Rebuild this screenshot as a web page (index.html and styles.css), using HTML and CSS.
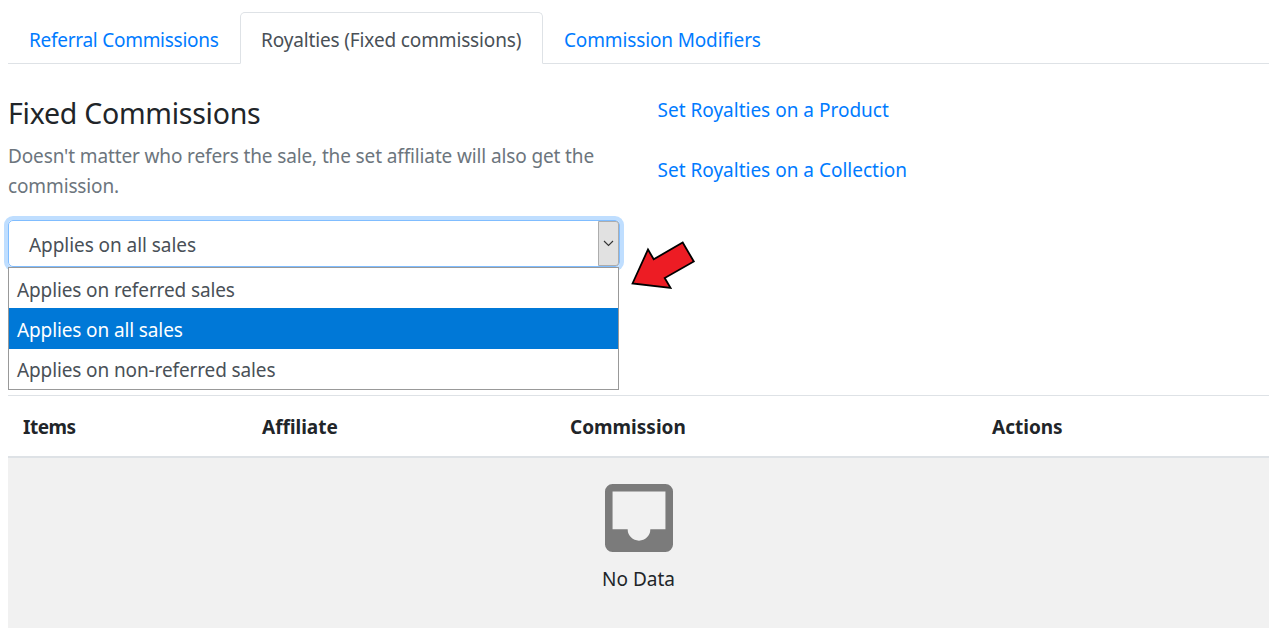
FILE: index.html
```html
<!DOCTYPE html>
<html lang="en">
<head>
<meta charset="utf-8">
<title>Fixed Commissions</title>
<link rel="stylesheet" href="styles.css">
</head>
<body>
<nav class="tabs">
  <a class="tab tab-referral"><span>Referral Commissions</span></a>
  <a class="tab tab-active"><span>Royalties (Fixed commissions)</span></a>
  <a class="tab tab-modifiers"><span>Commission Modifiers</span></a>
</nav>
<main class="settings">
  <section class="fixed">
    <h1 class="title"><span>Fixed Commissions</span></h1>
    <p class="description"><span>Doesn't matter who refers the sale, the set affiliate will also get the</span><br><span>commission.</span></p>
    <div class="select">
      <div class="select-value"><span>Applies on all sales</span></div>
      <div class="select-button"><svg width="11" height="7" viewBox="0 0 11 7"><path d="M1 1l4.5 4.5L10 1" fill="none" stroke="#333" stroke-width="1.1"/></svg></div>
      <div class="menu">
        <div class="option"><span>Applies on referred sales</span></div>
        <div class="option option-selected"><span>Applies on all sales</span></div>
        <div class="option"><span>Applies on non-referred sales</span></div>
      </div>
      <svg class="pointer" width="68" height="52" viewBox="629 239 68 52"><path d="M632.5 283.5L648 249.5L653.7 259.3L682.7 242.5L693.8 261.5L664.7 278L670.5 287.8Z" fill="#ed1c24" stroke="#000" stroke-width="1.8"/></svg>
    </div>
  </section>
  <section class="links">
    <a class="link"><span>Set Royalties on a Product</span></a>
    <a class="link"><span>Set Royalties on a Collection</span></a>
  </section>
</main>
<section class="table">
  <div class="table-head">
    <span class="col-items">Items</span><span>Affiliate</span><span>Commission</span><span>Actions</span>
  </div>
  <div class="empty">
    <svg class="tray" width="68" height="68" viewBox="3 3 18 18"><path d="M19 3H5a2 2 0 0 0-2 2v14a2 2 0 0 0 2 2h14a2 2 0 0 0 2-2V5a2 2 0 0 0-2-2zm0 12h-4a3 3 0 0 1-6 0H5V5h14z" fill="#7b7b7b"/></svg>
    <span>No Data</span>
  </div>
</section>
</body>
</html>
```
FILE: styles.css
```css
* { box-sizing: border-box; }
body {
  margin: 0;
  padding: 12px 8px 0;
  background: #fff;
  color: #212529;
  font: 19px/30px "Noto Sans", "Open Sans", sans-serif;
}
.tabs { display: flex; height: 52px; border-bottom: 1px solid #dee2e6; }
.tab {
  height: 52px;
  padding: 12px 20px;
  border: 1px solid transparent;
  color: #007bff;
  letter-spacing: -0.14px;
  white-space: nowrap;
}
.tab-referral { width: 232px; letter-spacing: -0.27px; }
.tab-active {
  width: 303px;
  color: #495057;
  background: #fff;
  border-color: #dee2e6 #dee2e6 #fff;
  border-radius: 5px 5px 0 0;
}
.settings { display: flex; height: 331px; }
.fixed { width: 612px; padding-top: 31px; }
.title { margin: 0 0 10px; font-size: 28.5px; font-weight: 400; line-height: 36px; letter-spacing: -0.25px; }
.description { margin: 0 0 19px; color: #6c757d; letter-spacing: -0.13px; white-space: nowrap; }
.select {
  position: relative;
  display: flex;
  height: 47px;
  border: 1px solid #80bdff;
  border-radius: 5px;
  box-shadow: 0 0 0 4px #bfdeff;
  color: #495057;
  letter-spacing: -0.06px;
}
.select-value { flex: 1; padding: 9px 20px; }
.select-button {
  display: flex;
  width: 21px;
  align-items: center;
  justify-content: center;
  border: 1px solid #adadad;
  border-radius: 0 3px 3px 0;
  background: #e1e1e1;
}
.menu {
  position: absolute;
  top: 46px;
  left: -1px;
  width: 611px;
  border: 1px solid #999;
  background: #fff;
  letter-spacing: -0.12px;
}
.option { height: 40px; padding: 7px 8px 0; line-height: 30px; }
.option-selected { height: 41px; background: #0078d7; color: #fff; }
.option:last-child { padding-top: 6px; }
.pointer { position: absolute; top: 18px; left: 620px; }
.links { display: flex; flex-direction: column; gap: 30px; padding: 31px 0 0 37.5px; }
.link { color: #007bff; }
.table { border-top: 1px solid #dee2e6; }
.table-head {
  display: grid;
  grid-template-columns: 239px 308px 422px 1fr;
  height: 62px;
  padding: 16px 15px;
  border-bottom: 2px solid #dee2e6;
  font-weight: 700;
}
.col-items { letter-spacing: -0.5px; }
.empty {
  display: flex;
  height: 170px;
  flex-direction: column;
  align-items: center;
  gap: 12px;
  padding-top: 26px;
  background: #f1f1f1;
}
```
